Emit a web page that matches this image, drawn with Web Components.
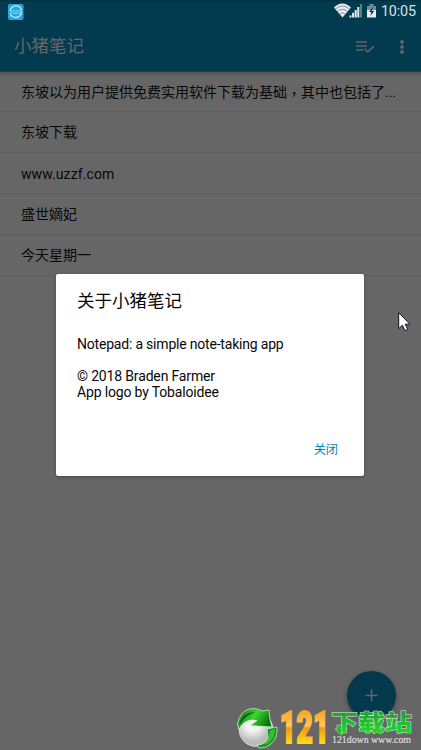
<!DOCTYPE html>
<html lang="zh-CN"><head><meta charset="utf-8"><title>小猪笔记</title>
<style>html,body{margin:0;background:#666;overflow:hidden}body{font-family:Roboto,"Noto Sans CJK SC",sans-serif}</style></head>
<body><notepad-app></notepad-app>
<script>
const define=(name,html)=>customElements.define(name,class extends HTMLElement{constructor(){super();this.attachShadow({mode:'open'}).innerHTML=html}});
define('status-bar',`<style>:host{display:flex;height:22px;align-items:center;padding:0 5px 0 8px;background:linear-gradient(#002f42,#023b50 3px);color:#d8e0e4;font-size:14.3px}svg{display:block;flex:none}.sp{flex:1}span{line-height:22px;margin-left:3px;letter-spacing:-.1px}</style>
<svg width="16" height="18" viewBox="0 0 16 18"><rect y="2" width="15.5" height="16" rx="2" fill="#26a5dc"/><circle cx="7.8" cy="9.7" r="5.8" fill="none" stroke="#bfeaff" stroke-width="1.3" stroke-dasharray="16 2.2"/><text x="7.8" y="11.5" text-anchor="middle" font-size="4.5" fill="#a6e4ff">YGDX</text></svg><div class="sp"></div>
<svg width="44" height="22" viewBox="0 0 44 22"><path d="M0 7.5Q8-.5 17 7.5L8.5 17.5Z" fill="#e8eef0"/><g fill="none" stroke="#456a79" stroke-width=".7"><path d="M1.4 9Q8.5 3 15.6 9M3.5 11.5Q8.5 7.3 13.5 11.5M5.6 14Q8.5 11.6 11.4 14"/></g><path d="M15.5 17.5h2v-2h-2zM18.1 17.5h2v-4.8h-2zM20.7 17.5h2V10h-2zM23.3 17.5h2V7h-2z" fill="#e8eef0"/><path d="M26 17.5h2V4h-2z" fill="#5c7f8d"/><path d="M35.5 4h4v2H42v5h-9V6h2.5z" fill="#6c8995"/><path d="M33 10h9v7.5h-9z" fill="#e8eef0"/><path d="M39 7l-4 5h2.3l-1 4 4-5H38z" fill="#103646"/></svg><span>10:05</span>`);
define('app-toolbar',`<style>:host{display:flex;box-sizing:border-box;height:50px;align-items:center;padding:0 13px 0 14px;background:#023b50;border-bottom:1px solid #034b63;color:#666;font-size:17.5px}span{flex:1;line-height:24px;position:relative;top:-1px}svg{display:block}</style><span><slot></slot></span><svg width="52" height="22" viewBox="0 0 52 22"><path d="M0 6h11M0 10h11M0 14h7M8.5 12.8l3.2 3.2L18 10" fill="none" stroke="#666" stroke-width="1.6"/><g fill="#666"><circle cx="46" cy="6" r="1.9"/><circle cx="46" cy="11" r="1.9"/><circle cx="46" cy="16" r="1.9"/></g></svg>`);
define('note-row',`<style>:host{display:flex;box-sizing:border-box;height:41px;align-items:center;padding:0 24px 0 21px;border-bottom:1px solid #5b5b5b;color:#080808;font-size:14px}span{line-height:20px;white-space:nowrap}:host(.latin) span{padding-top:2px;letter-spacing:.1px}</style><span><slot></slot></span>`);
define('about-dialog',`<style>:host{display:flex;flex-direction:column;box-sizing:border-box;width:308px;height:202px;padding:15px 21px 15px;background:white;border-radius:2px;color:#080808;box-shadow:0 1px 3px #444}h2{font-size:17.5px;line-height:24px;font-weight:400;margin:0 0 23px}p{font-size:14px;line-height:16px;margin:0 0 16px;letter-spacing:-.16px}p:first-of-type{letter-spacing:-.2px}button{border:0;background:none;padding:0 5px;margin:auto 0 1px;align-self:flex-end;font:12.2px/20px Roboto,"Noto Sans CJK SC",sans-serif;color:#0288b0}</style><h2>关于小猪笔记</h2><p>Notepad: a simple note-taking app</p><p>© 2018 Braden Farmer<br>App logo by Tobaloidee</p><button>关闭</button>`);
define('add-button',`<style>:host{display:block;width:49px;height:49px;border-radius:50%;background:#02394d;box-shadow:0 2px 4px #333a}svg{display:block}</style><svg width="49" height="49"><path d="M18.5 24.5h12M24.5 18.5v12" stroke="#666" stroke-width="1.6"/></svg>`);
define('site-mark',`<style>:host{display:block}svg{display:block;overflow:visible}</style><svg width="184" height="45" viewBox="236 705 184 45"><defs><radialGradient id="b" cx=".4" cy=".35"><stop offset=".4" stop-color="#f4f4f4"/><stop offset="1" stop-color="#bbb"/></radialGradient><linearGradient id="g" x2="1" y2=".4"><stop stop-color="#086b12"/><stop offset=".55" stop-color="#39d52d"/><stop offset="1" stop-color="#07750f"/></linearGradient><linearGradient id="o" x1="0" x2="0" y1="709" y2="743" gradientUnits="userSpaceOnUse"><stop stop-color="#f5a01e"/><stop offset=".5" stop-color="#ffc95a"/><stop offset=".56" stop-color="#f39a13"/><stop offset="1" stop-color="#ffd915"/></linearGradient><linearGradient id="t" x1="0" x2="0" y1="710" y2="730" gradientUnits="userSpaceOnUse"><stop stop-color="#25983b"/><stop offset="1" stop-color="#18d629"/></linearGradient></defs>
<circle cx="256" cy="729.5" r="17" fill="url(#b)" stroke="#eee" stroke-width=".6"/>
<path d="M237.5 724Q240 712 248 709.5Q256 707 262 711L269 710Q269 718 272 727L250 725.5L257 720.5Q247 718.5 241 726L239 730Z" fill="url(#g)" stroke="#e3f3e0" stroke-width=".7"/>
<path d="M267 729L277 727Q278 738 271 744Q266 748.5 259 748L257 745Q264 745 268 739Z" fill="#159b1b" stroke="#dbeed8" stroke-width=".7"/><path d="M239 723Q244 712 255 712Q246 715 240 724Z" fill="#075f10"/><path d="M270 731l5-2q0 8-6 14-4 2-6 1 6-4 7-13z" fill="#52d447" opacity=".6"/>
<text x="279.5" y="742.5" textLength="50" lengthAdjust="spacingAndGlyphs" font-family="Roboto" font-weight="900" font-size="45" fill="url(#o)" stroke="url(#o)" stroke-width="1.8">121</text>
<path d="M337 725h7v4h3l-6 6-6-6h2z" fill="#18bd24" stroke="#dcf0d5" stroke-width=".5"/>
<text x="331" y="729.5" font-family="Noto Sans CJK SC" font-weight="900" font-size="22" textLength="81" lengthAdjust="spacingAndGlyphs" fill="url(#t)" stroke="#d6ead1" stroke-width=".9" paint-order="stroke">下载站</text>
<text x="332" y="743.3" font-family="Liberation Serif" font-size="9.5" textLength="79" lengthAdjust="spacingAndGlyphs" fill="#ddd" stroke="#ddd" stroke-width=".2">121down www.com</text></svg>`);
define('notepad-app',`<style>:host{display:block;position:relative;width:421px;height:750px;background:#666;overflow:hidden}main note-row:first-child{height:40px;background:linear-gradient(#555,#666 5px)}i{display:inline-block;font-style:normal;font-family:"Noto Sans CJK TC",sans-serif;line-height:1;transform:translateY(2px)}about-dialog{position:absolute;left:56px;top:274px}add-button{position:absolute;left:347px;top:671px}site-mark{position:absolute;left:236px;top:705px}.cursor{position:absolute;left:398px;top:312px}</style><status-bar></status-bar><app-toolbar>小猪笔记</app-toolbar><main><note-row>东坡以为用户提供免费实用软件下载为基础<i lang="zh-TW">，</i>其中也包括了...</note-row><note-row>东坡下载</note-row><note-row class="latin">www.uzzf.com</note-row><note-row>盛世嫡妃</note-row><note-row>今天星期一</note-row></main><about-dialog></about-dialog><add-button></add-button><site-mark></site-mark><svg class="cursor" width="13" height="20"><path d="M.7.7v16l3.7-3.5 2.6 5.5 2.7-1.3-2.5-5.2H12z" fill="#fff" stroke="#11112b"/></svg>`);
</script></body></html>
